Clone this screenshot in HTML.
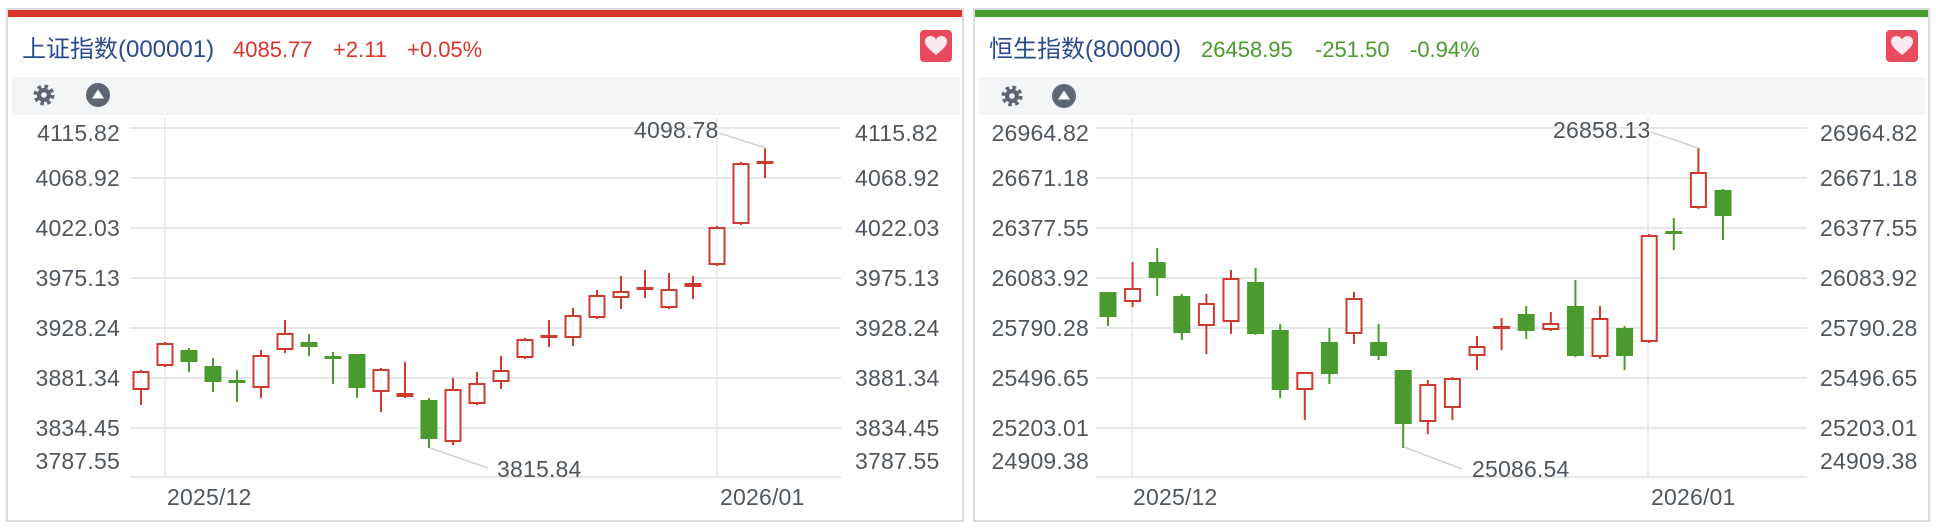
<!DOCTYPE html>
<html><head><meta charset="utf-8"><style>
html,body{margin:0;padding:0;background:#fff;width:1936px;height:532px;overflow:hidden}
svg{display:block}
text{font-family:"Liberation Sans","Noto Sans CJK SC",sans-serif}
</style></head><body>
<svg id="s" width="1936" height="532" xmlns="http://www.w3.org/2000/svg">
<!-- Left panel -->
<rect x="7" y="9" width="956" height="512" fill="#fff" stroke="#d9dcdf" stroke-width="2"/>
<rect x="8" y="10" width="954" height="7" fill="#d8342c"/>
<rect x="12" y="77" width="948" height="38" fill="#f4f5f6"/>
<text x="22" y="57" font-size="24" fill="#2c4b8e">上证指数(000001)</text>
<text x="233" y="57" font-size="22" fill="#d8352d">4085.77</text>
<text x="333" y="57" font-size="22" fill="#d8352d">+2.11</text>
<text x="407" y="57" font-size="22" fill="#d8352d">+0.05%</text>
<rect x="920" y="30" width="32" height="32" rx="4" fill="#e84a5e"/>
<path d="M936 55 C929 49 925 46 925 41.5 C925 38 927.5 36 930.5 36 C933 36 935 37.5 936 39.5 C937 37.5 939 36 941.5 36 C944.5 36 947 38 947 41.5 C947 46 943 49 936 55Z" fill="#fde8ee"/>
<g fill="#5f6673"><circle cx="44" cy="95" r="7"/><circle cx="44" cy="95" r="8.5" fill="none" stroke="#5f6673" stroke-width="4" stroke-dasharray="3.5 3.2"/><circle cx="44" cy="95" r="2.8" fill="#f4f5f6"/>
<circle cx="98" cy="95" r="12"/><path d="M98 89.5 L104 98.5 L92 98.5Z" fill="#fff"/></g>

<!-- Right panel -->
<rect x="974" y="9" width="955" height="512" fill="#fff" stroke="#d9dcdf" stroke-width="2"/>
<rect x="975" y="10" width="953" height="7" fill="#4a9a2f"/>
<rect x="979" y="77" width="946" height="38" fill="#f4f5f6"/>
<text x="989" y="57" font-size="24" fill="#2c4b8e">恒生指数(800000)</text>
<text x="1201" y="57" font-size="22" fill="#4a9a2f">26458.95</text>
<text x="1315" y="57" font-size="22" fill="#4a9a2f">-251.50</text>
<text x="1410" y="57" font-size="22" fill="#4a9a2f">-0.94%</text>
<rect x="1886" y="30" width="32" height="32" rx="4" fill="#e84a5e"/>
<path d="M1902 55 C1895 49 1891 46 1891 41.5 C1891 38 1893.5 36 1896.5 36 C1899 36 1901 37.5 1902 39.5 C1903 37.5 1905 36 1907.5 36 C1910.5 36 1913 38 1913 41.5 C1913 46 1909 49 1902 55Z" fill="#fde8ee"/>
<g fill="#5f6673"><circle cx="1012" cy="96" r="7"/><circle cx="1012" cy="96" r="8.5" fill="none" stroke="#5f6673" stroke-width="4" stroke-dasharray="3.5 3.2"/><circle cx="1012" cy="96" r="2.8" fill="#f4f5f6"/>
<circle cx="1064" cy="96" r="12"/><path d="M1064 90.5 L1070 99.5 L1058 99.5Z" fill="#fff"/></g>

<g id="grid" stroke="#e6e7e9" stroke-width="2"></g>
<g id="c"></g>

<g font-size="23" fill="#50565f" letter-spacing="0.2">
<g text-anchor="end">
<text x="120" y="141">4115.82</text><text x="120" y="186">4068.92</text><text x="120" y="236">4022.03</text><text x="120" y="286">3975.13</text><text x="120" y="336">3928.24</text><text x="120" y="386">3881.34</text><text x="120" y="436">3834.45</text><text x="120" y="469">3787.55</text>
<text x="1089" y="141">26964.82</text><text x="1089" y="186">26671.18</text><text x="1089" y="236">26377.55</text><text x="1089" y="286">26083.92</text><text x="1089" y="336">25790.28</text><text x="1089" y="386">25496.65</text><text x="1089" y="436">25203.01</text><text x="1089" y="469">24909.38</text>
</g>
<text x="855" y="141">4115.82</text><text x="855" y="186">4068.92</text><text x="855" y="236">4022.03</text><text x="855" y="286">3975.13</text><text x="855" y="336">3928.24</text><text x="855" y="386">3881.34</text><text x="855" y="436">3834.45</text><text x="855" y="469">3787.55</text>
<text x="1820" y="141">26964.82</text><text x="1820" y="186">26671.18</text><text x="1820" y="236">26377.55</text><text x="1820" y="286">26083.92</text><text x="1820" y="336">25790.28</text><text x="1820" y="386">25496.65</text><text x="1820" y="436">25203.01</text><text x="1820" y="469">24909.38</text>
<text x="167" y="505">2025/12</text><text x="720" y="505">2026/01</text>
<text x="1133" y="505">2025/12</text><text x="1651" y="505">2026/01</text>
<text x="634" y="138">4098.78</text><text x="497" y="477">3815.84</text>
<text x="1553" y="138">26858.13</text><text x="1472" y="477">25086.54</text>
</g>
<g stroke="#cfd2d6" stroke-width="1.5">
<line x1="719" y1="133" x2="766" y2="148"/><line x1="430" y1="448" x2="488" y2="468"/>
<line x1="1651" y1="132" x2="1698" y2="148"/><line x1="1404" y1="447" x2="1462" y2="469"/>
</g>
</svg>
<script>
var NS="http://www.w3.org/2000/svg";
function el(p,t,a){var e=document.createElementNS(NS,t);for(var k in a)e.setAttribute(k,a[k]);p.appendChild(e);return e;}
var g=document.getElementById("grid");
[[130,841,165,717],[1096,1807,1132,1648]].forEach(function(c){
 [128,178,228,278,328,378,428].forEach(function(y){el(g,"line",{x1:c[0],x2:c[1],y1:y,y2:y});});
 el(g,"line",{x1:c[0],x2:c[1],y1:477,y2:477});
 el(g,"line",{x1:c[2],x2:c[2],y1:118,y2:477,"stroke-width":1.5});
 el(g,"line",{x1:c[3],x2:c[3],y1:118,y2:477,"stroke-width":1.5});
});
var R="#cf3a2e",G="#4a9a2f";
var L=[["rh",371,390,370,405],["rh",343,366,342,367],["g",350,362,348,372],["g",366,382,358,392],["g",380,383,370,402],["rh",355,388,350,398],["rh",333,350,320,353],["g",342,347,334,356],["g",356,359,352,384],["g",354,388,354,398],["rh",369,392,368,412],["rf",393,397,362,398],["g",400,439,398,448],["rh",389,442,378,445],["rh",383,404,372,405],["rh",370,382,356,389],["rh",339,358,338,359],["rf",335,338,320,347],["rh",315,338,308,346],["rh",295,318,290,319],["rh",291,298,276,309],["rf",287,290,270,298],["rh",289,308,273,309],["rf",283,287,276,299],["rh",227,265,226,266],["rh",163,224,162,225],["rf",161,164,148,178]];
var Rt=[["g",292,317,292,326],["rh",288,302,262,307],["g",262,278,248,296],["g",296,333,294,340],["rh",303,326,294,354],["rh",278,322,270,334],["g",282,334,268,335],["g",330,390,324,398],["rh",372,390,372,420],["g",342,374,328,384],["rh",298,334,292,344],["g",342,356,324,360],["g",370,424,370,448],["rh",384,422,380,434],["rh",378,408,377,420],["rh",346,356,336,370],["rf",326,329,318,350],["g",314,331,306,339],["rh",323,330,312,331],["g",306,356,280,357],["rh",318,357,306,359],["g",328,356,326,370],["rh",235,342,234,343],["g",231,234,218,250],["rh",172,208,148,209],["g",190,216,189,240]];
var cg=document.getElementById("c");
function draw(arr,x0,st){arr.forEach(function(d,i){var x=x0+st*i,col=d[0]=="g"?G:R;
 el(cg,"line",{x1:x,x2:x,y1:d[3],y2:d[4],stroke:col,"stroke-width":2});
 if(d[0]=="rh") el(cg,"rect",{x:x-7.5,y:d[1]+1,width:15,height:Math.max(d[2]-d[1]-2,1),fill:"#fff",stroke:col,"stroke-width":2});
 else el(cg,"rect",{x:x-8.5,y:d[1],width:17,height:Math.max(d[2]-d[1],3),fill:col});
});}
draw(L,141,24);draw(Rt,1108,24.6);
</script>
</body></html>
